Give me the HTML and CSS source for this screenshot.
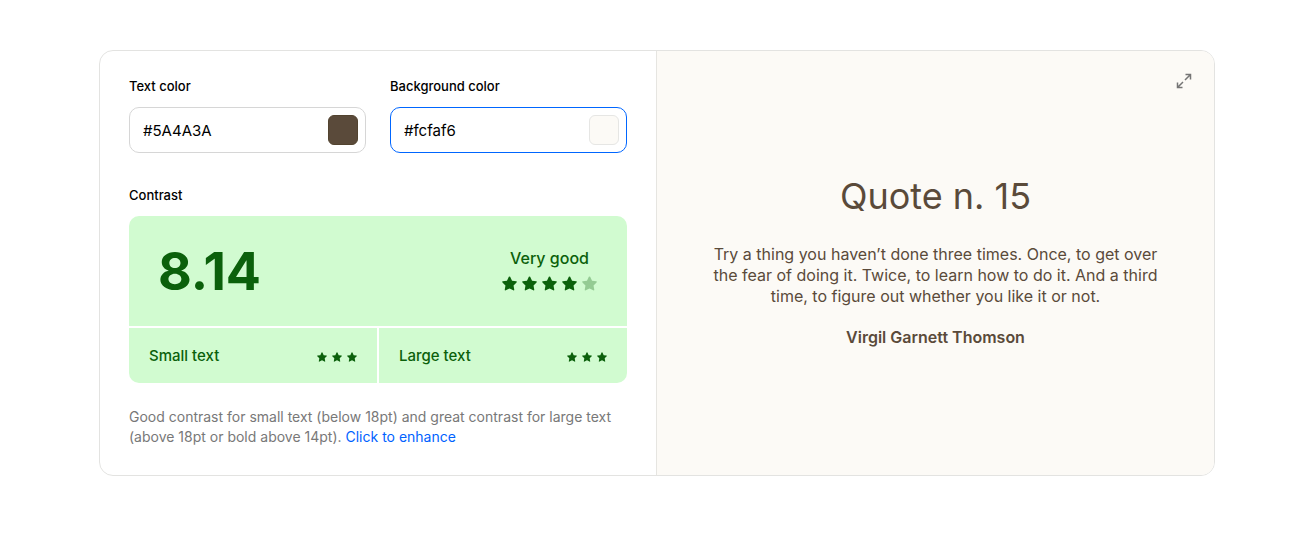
FILE: index.html
```html
<!DOCTYPE html>
<html lang="en">
<head>
<meta charset="utf-8">
<meta name="viewport" content="width=device-width, initial-scale=1">
<title>Contrast checker</title>
<link rel="stylesheet" href="styles.css">
</head>
<body>
<svg class="sprite" aria-hidden="true">
  <symbol id="star" viewBox="0 0 16 16">
    <path d="M7.3.9Q8 0 8.7.9L10.7 5L15.2 5.7Q16.3 6 15.5 6.900L12.300 10L13.100 14.600Q13.100 15.800 12 15.300L8 13.200L4 15.300Q2.900 15.800 2.900 14.600L3.700 10L.5 6.900Q-.3 6 .8 5.700L5.300 5Z"/>
  </symbol>
</svg>
<main class="card">
  <section class="controls">
    <div class="fields">
      <div class="field">
        <label class="label" for="text-color">Text color</label>
        <div class="box">
          <input class="value" id="text-color" type="text" value="#5A4A3A" spellcheck="false">
          <button class="swatch swatch-text" type="button" aria-label="Pick text color"></button>
        </div>
      </div>
      <div class="field">
        <label class="label" for="background-color">Background color</label>
        <div class="box box-active">
          <input class="value" id="background-color" type="text" value="#fcfaf6" spellcheck="false">
          <button class="swatch swatch-background" type="button" aria-label="Pick background color"></button>
        </div>
      </div>
    </div>
    <h2 class="label">Contrast</h2>
    <div class="result">
      <div class="summary">
        <span class="ratio">8.14</span>
        <div class="rating">
          <span class="verdict">Very good</span>
          <div class="stars" role="img" aria-label="4 of 5 stars">
            <svg class="star"><use href="#star"/></svg>
            <svg class="star"><use href="#star"/></svg>
            <svg class="star"><use href="#star"/></svg>
            <svg class="star"><use href="#star"/></svg>
            <svg class="star star-off"><use href="#star"/></svg>
          </div>
        </div>
      </div>
      <div class="size">
        <span>Small text</span>
        <div class="stars stars-small" role="img" aria-label="3 of 3 stars">
          <svg class="star"><use href="#star"/></svg>
          <svg class="star"><use href="#star"/></svg>
          <svg class="star"><use href="#star"/></svg>
        </div>
      </div>
      <div class="size">
        <span>Large text</span>
        <div class="stars stars-small" role="img" aria-label="3 of 3 stars">
          <svg class="star"><use href="#star"/></svg>
          <svg class="star"><use href="#star"/></svg>
          <svg class="star"><use href="#star"/></svg>
        </div>
      </div>
    </div>
    <p class="note">Good contrast for small text (below 18pt) and great contrast for large text (above 18pt or bold above 14pt). <a class="link" href="#enhance">Click to enhance</a></p>
  </section>
  <section class="preview">
    <button class="expand" type="button" aria-label="Full screen">
      <svg class="expand-icon" viewBox="0 0 16 16"><path d="M9.500 1.500H14.500V6.500M14.500 1.500L9 7M6.500 14.500H1.500V9.500M1.500 14.500L7 9"/></svg>
    </button>
    <h1 class="title">Quote n. 15</h1>
    <p class="quote">Try a thing you haven’t done three times. Once, to get over the fear of doing it. Twice, to learn how to do it. And a third time, to figure out whether you like it or not.</p>
    <p class="author">Virgil Garnett Thomson</p>
  </section>
</main>
</body>
</html>
```
FILE: styles.css
```css
* {
  box-sizing: border-box;
}

body {
  margin: 0;
  padding: 50px 94px 50px 99px;
  background: #fff;
  color: #000;
  font-family: Inter, "Liberation Sans", sans-serif;
}

.sprite {
  position: absolute;
  width: 0;
  height: 0;
}

.card {
  display: grid;
  grid-template-columns: repeat(2, minmax(0, 1fr));
  overflow: hidden;
  border: 1px solid #e3e3e1;
  border-radius: 14px;
}

.controls {
  padding: 26px 29px 28px;
  border-right: 1px solid #e6e5e1;
}

.fields {
  display: grid;
  grid-template-columns: repeat(2, minmax(0, 1fr));
  gap: 24px;
  margin-bottom: 33px;
}

.label {
  display: block;
  margin: 0 0 11px;
  font-size: 13px;
  font-weight: 500;
  line-height: 19px;
}

.box {
  display: flex;
  align-items: center;
  height: 46px;
  padding: 0 7px 0 13px;
  border: 1px solid #d6d6d6;
  border-radius: 10px;
}

.box-active {
  border-color: #0066ff;
}

.value {
  flex: 1;
  min-width: 0;
  padding: 2px 0 0;
  border: 0;
  outline: 0;
  background: none;
  color: #000;
  font-family: inherit;
  font-size: 15px;
  line-height: 20px;
}

.swatch {
  width: 30px;
  height: 30px;
  padding: 0;
  border: 1px solid #e6e6e4;
  border-radius: 6px;
}

.swatch-text {
  border-color: #52432f;
  background: #5a4a3a;
}

.swatch-background {
  background: #fcfaf6;
}

.result {
  display: grid;
  grid-template-columns: repeat(2, minmax(0, 1fr));
  gap: 2px;
  overflow: hidden;
  border-radius: 10px;
  color: #0b600b;
}

.summary {
  display: flex;
  grid-column: 1 / -1;
  align-items: center;
  justify-content: space-between;
  height: 110px;
  padding: 0 30px 0 29px;
  background: #d1fbd0;
}

.ratio {
  padding-top: 2px;
  font-size: 52px;
  font-weight: 700;
  line-height: 60px;
}

.rating {
  display: flex;
  flex-direction: column;
  align-items: center;
  gap: 8px;
  padding-bottom: 4px;
}

.verdict {
  font-size: 16px;
  font-weight: 500;
  line-height: 20px;
}

.stars {
  display: flex;
  gap: 5px;
}

.star {
  width: 15px;
  height: 15px;
  fill: currentColor;
}

.star-off {
  opacity: 0.3;
}

.stars-small {
  padding-top: 2px;
}

.stars-small .star {
  width: 10px;
  height: 10px;
}

.size {
  display: flex;
  align-items: center;
  justify-content: space-between;
  height: 55px;
  padding: 0 20px;
  background: #d1fbd0;
  font-size: 15px;
  font-weight: 500;
  line-height: 20px;
}

.note {
  margin: 24px 0 0;
  color: #787878;
  font-size: 14px;
  line-height: 20px;
}

.link {
  color: #0062ff;
  text-decoration: none;
}

.preview {
  position: relative;
  display: flex;
  flex-direction: column;
  align-items: center;
  justify-content: center;
  padding: 0 52px 4px;
  background: #fcfaf6;
  color: #5a4a3a;
  text-align: center;
}

.expand {
  position: absolute;
  top: 22px;
  right: 22px;
  display: flex;
  padding: 0;
  border: 0;
  background: none;
  color: #757575;
}

.expand-icon {
  width: 16px;
  height: 16px;
  fill: none;
  stroke: currentColor;
  stroke-width: 1.5;
}

.title {
  margin: 0 0 26px;
  font-size: 36px;
  font-weight: 400;
  line-height: 44px;
}

.quote,
.author {
  margin: 0;
  font-size: 16px;
  line-height: 21px;
}

.author {
  margin-top: 20px;
  font-weight: 600;
}
```
